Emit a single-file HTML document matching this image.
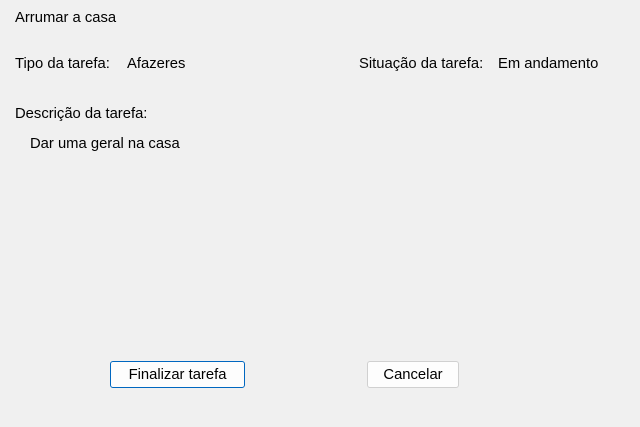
<!DOCTYPE html>
<html><head><style>
body{margin:0;width:640px;height:427px;background:#f0f0f0;font-family:"Liberation Sans",sans-serif;font-size:14.8px;color:#000;position:relative;overflow:hidden}
.t{position:absolute;white-space:nowrap;line-height:16px}
.b{position:absolute;box-sizing:border-box;background:#fdfdfd;border:1px solid #d0d0d0;border-radius:3px;text-align:center;line-height:27px;font-size:14.8px}
</style></head><body>
<div class="t" style="left:15px;top:10px">Arrumar a casa</div>
<div class="t" style="left:15px;top:56px">Tipo da tarefa:</div>
<div class="t" style="left:127px;top:56px">Afazeres</div>
<div class="t" style="left:359px;top:56px">Situação da tarefa:</div>
<div class="t" style="left:498px;top:56px">Em andamento</div>
<div class="t" style="left:15px;top:106px">Descrição da tarefa:</div>
<div class="t" style="left:30px;top:136px">Dar uma geral na casa</div>
<div class="b" style="left:110px;top:361px;width:135px;height:27px;border-color:#0067c0">Finalizar tarefa</div>
<div class="b" style="left:367px;top:361px;width:92px;height:27px">Cancelar</div>
</body></html>
